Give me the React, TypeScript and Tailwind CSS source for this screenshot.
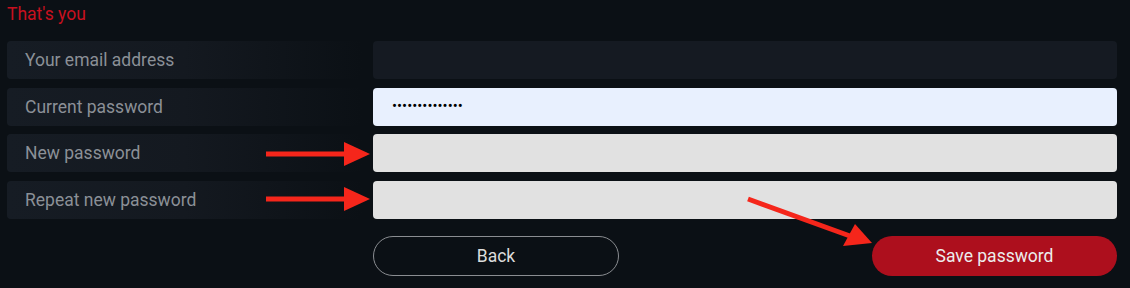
import React from "react";

const rows = [
  { label: "Your email address", kind: "email" },
  { label: "Current password", kind: "current" },
  { label: "New password", kind: "new" },
  { label: "Repeat new password", kind: "repeat" },
];

function Arrows() {
  return (
    <svg
      className="pointer-events-none absolute left-0 top-0"
      width="1130"
      height="288"
      viewBox="0 0 1130 288"
    >
      <g fill="#f5261b">
        <rect x="266" y="151.5" width="80" height="5" />
        <polygon points="344,142 370,154 344,166" />
        <rect x="266" y="196.5" width="80" height="5" />
        <polygon points="344,187 370,199 344,211" />
      </g>
      <line x1="748" y1="199" x2="850" y2="236" stroke="#f5261b" strokeWidth="5" />
      <polygon points="843,246 872,243 855,224" fill="#f5261b" />
    </svg>
  );
}

export default function App() {
  return (
    <div className="relative h-[288px] w-[1130px] overflow-hidden bg-[#0b1015] pl-[7px] pr-[13px] font-['Roboto',sans-serif]">
      <h2 className="pt-[2px] text-[17.5px] leading-6 text-[#c8101f]">That's you</h2>

      <div className="mt-[15px] grid grid-cols-[355px_1fr] gap-x-[11px] gap-y-[8.67px]">
        {rows.map((row) => (
          <React.Fragment key={row.kind}>
            <div className="flex h-[38px] items-center rounded-[4px] bg-gradient-to-r from-[#161c24] via-[#141920] to-transparent pl-[18px] text-[17.5px] text-[#8b9097]">
              {row.label}
            </div>
            {row.kind === "email" && <div className="h-[38px] rounded-[4px] bg-[#151a22]" />}
            {row.kind === "current" && (
              <div className="flex h-[38px] items-center rounded-[4px] bg-[#e8f0fe] pl-[19px] text-[15px] text-black">
                ••••••••••••••
              </div>
            )}
            {(row.kind === "new" || row.kind === "repeat") && (
              <div className="h-[38px] rounded-[4px] bg-[#e1e1e1]" />
            )}
          </React.Fragment>
        ))}
      </div>

      <div className="mt-[17px] ml-[366px] flex justify-between">
        <button className="h-[40px] w-[246px] rounded-full border border-[#8a8d91] text-[17.5px] text-[#dcdcdc]">
          Back
        </button>
        <button className="h-[40px] w-[245px] rounded-full bg-[#ad0f1d] text-[17.5px] text-[#ececec]">
          Save password
        </button>
      </div>

      <Arrows />
    </div>
  );
}
